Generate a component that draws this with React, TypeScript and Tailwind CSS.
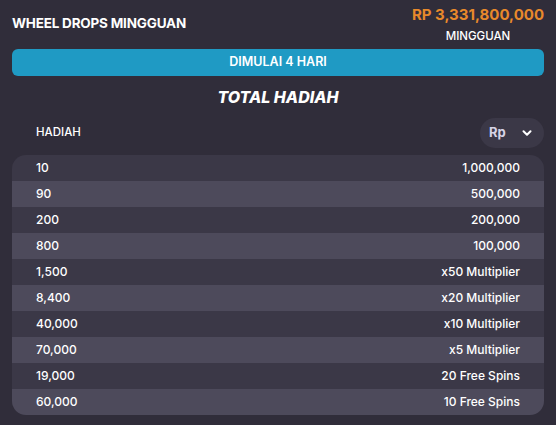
import { ChevronDown } from "lucide-react";

const rows: [string, string][] = [
  ["10", "1,000,000"],
  ["90", "500,000"],
  ["200", "200,000"],
  ["800", "100,000"],
  ["1,500", "x50 Multiplier"],
  ["8,400", "x20 Multiplier"],
  ["40,000", "x10 Multiplier"],
  ["70,000", "x5 Multiplier"],
  ["19,000", "20 Free Spins"],
  ["60,000", "10 Free Spins"],
];

export default function App() {
  return (
    <div
      className="w-[556px] h-[425px] bg-[#302d3a] text-white px-3 pt-[5px]"
      style={{ fontFamily: "Inter, 'Noto Sans', sans-serif" }}
    >
      <div className="flex justify-between items-start">
        <div className="pt-[8px] text-[13.5px] font-bold tracking-[-0.2px]">WHEEL DROPS MINGGUAN</div>
        <div className="flex flex-col items-center">
          <div className="text-[15px] font-bold text-[#e8892b] leading-[20px]">RP 3,331,800,000</div>
          <div className="text-[11.5px] font-medium leading-[16px] mt-[3px]">MINGGUAN</div>
        </div>
      </div>
      <div className="mt-[5px] h-[27px] rounded-[6px] bg-[#1f9ac4] flex items-center justify-center text-[12.5px] font-semibold">
        DIMULAI 4 HARI
      </div>
      <div className="mt-[11px] text-center text-[16px] font-extrabold italic leading-[20px]">TOTAL HADIAH</div>
      <div className="mt-[11px] flex items-center justify-between">
        <div className="pl-6 text-[11.5px] font-medium">HADIAH</div>
        <div className="w-[64px] h-[30px] rounded-full bg-[#3b3847] flex items-center justify-between pl-[9px] pr-[10px]">
          <span className="text-[13px] font-bold text-[#d6d3e6]">Rp</span>
          <ChevronDown size={14} strokeWidth={3.5} className="text-white" />
        </div>
      </div>
      <div className="mt-[7px] rounded-[14px] overflow-hidden">
        {rows.map(([a, b], i) => (
          <div
            key={a}
            className={`h-[26px] flex items-center justify-between px-6 text-[12px] font-medium ${i % 2 === 0 ? "bg-[#3b3847]" : "bg-[#4d4a5b]"}`}
          >
            <span>{a}</span>
            <span>{b}</span>
          </div>
        ))}
      </div>
    </div>
  );
}
